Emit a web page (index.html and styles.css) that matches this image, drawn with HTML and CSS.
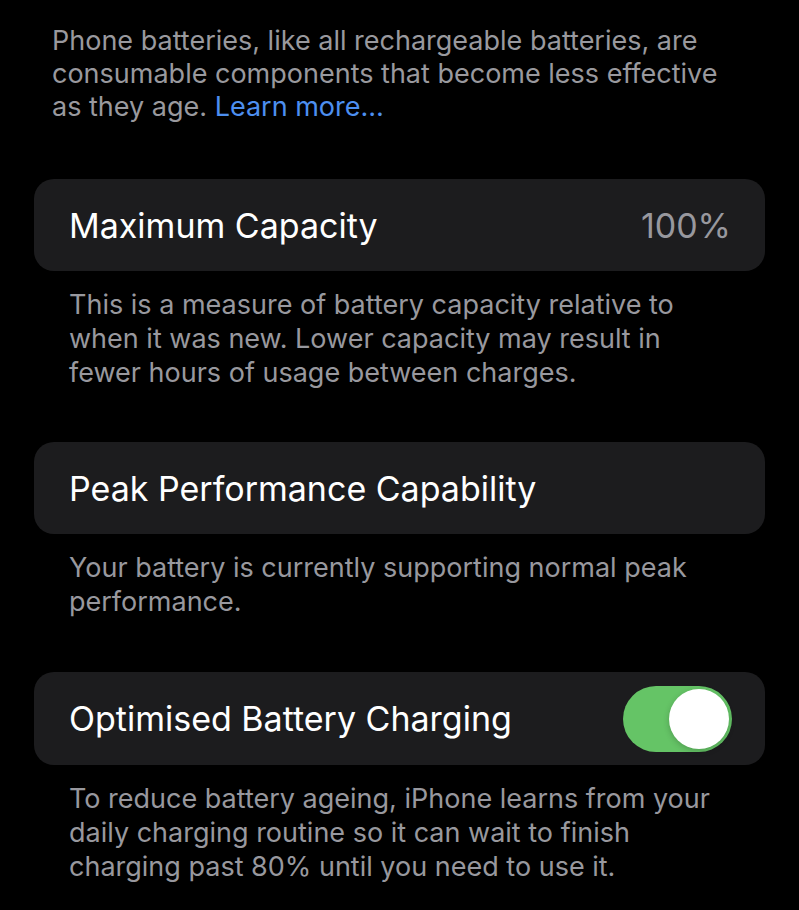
FILE: index.html
```html
<!DOCTYPE html>
<html>
<head>
<meta charset="utf-8">
<link rel="stylesheet" href="styles.css">
</head>
<body>
<div class="page">
  <p class="intro">Phone batteries, like all rechargeable batteries, are consumable components that become less effective as they age. <span class="link">Learn more…</span></p>

  <section class="group">
    <div class="card">
      <span class="title">Maximum Capacity</span>
      <span class="value">100%</span>
    </div>
    <p class="footer">This is a measure of battery capacity relative to when it was new. Lower capacity may result in fewer hours of usage between charges.</p>
  </section>

  <section class="group">
    <div class="card">
      <span class="title">Peak Performance Capability</span>
    </div>
    <p class="footer">Your battery is currently supporting normal peak performance.</p>
  </section>

  <section class="group group-last">
    <div class="card card-tall">
      <span class="title">Optimised Battery Charging</span>
      <span class="toggle"><span class="knob"></span></span>
    </div>
    <p class="footer">To reduce battery ageing, iPhone learns from your daily charging routine so it can wait to finish charging past 80% until you need to use it.</p>
  </section>
</div>
</body>
</html>
```

FILE: styles.css
```css
html, body {
  margin: 0;
  padding: 0;
  background: #000;
}
body {
  font-family: Inter, "Noto Sans", sans-serif;
  -webkit-font-smoothing: antialiased;
}
.page {
  width: 799px;
  height: 910px;
  overflow: hidden;
  padding-top: 24px;
  box-sizing: border-box;
}
.intro {
  margin: 0 60px 0 52px;
  font-size: 27px;
  line-height: 33px;
  color: #99999e;
}
.link {
  color: #4d8ff0;
}
.group {
  margin: 56px 34px 0 34px;
  display: flex;
  flex-direction: column;
}
.group + .group {
  margin-top: 52px;
}
.group.group-last {
  margin-top: 53px;
}
.card {
  height: 92px;
  background: #1c1c1e;
  border-radius: 20px;
  display: flex;
  align-items: center;
  justify-content: space-between;
  padding: 0 34px 0 35px;
  box-sizing: border-box;
}
.card-tall {
  height: 93px;
}
.title {
  color: #fff;
  font-size: 34px;
}
.value {
  color: #98989e;
  font-size: 34px;
}
.toggle {
  width: 109px;
  height: 66px;
  border-radius: 33px;
  background: #65c466;
  display: flex;
  align-items: center;
  justify-content: flex-end;
  padding: 0 3px;
  box-sizing: border-box;
  margin-right: -1px;
}
.knob {
  width: 60px;
  height: 60px;
  border-radius: 50%;
  background: #fff;
  box-shadow: 0 2px 6px rgba(0,0,0,0.2);
}
.footer {
  margin: 17px 35px 0 35px;
  font-size: 27px;
  line-height: 34px;
  color: #98989e;
}
```
